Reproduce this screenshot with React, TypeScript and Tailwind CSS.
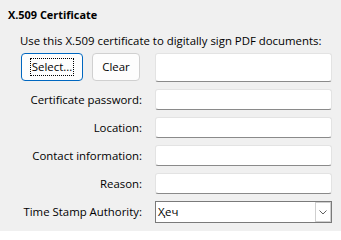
import React from 'react';

const labels = ['Certificate password:', 'Location:', 'Contact information:', 'Reason:'];

function Field({ tall }: { tall?: boolean }) {
  return (
    <div
      className={`bg-white border border-[#e3e3e3] border-b-[#8a8a8a] rounded-[3px] ${
        tall ? 'h-[29px]' : 'h-[21px]'
      }`}
    />
  );
}

export default function App() {
  return (
    <div
      className="w-[341px] h-[231px] bg-[#f0f0f0] text-black text-[11.4px] leading-[16px] overflow-hidden"
      style={{ fontFamily: '"Open Sans", "Noto Sans", sans-serif' }}
    >
      <div className="pl-2 pt-[7px] font-bold text-[10.9px]">X.509 Certificate</div>
      <div className="pl-5 mt-[10px]">Use this X.509 certificate to digitally sign PDF documents:</div>

      <div className="grid grid-cols-[155px_177px] gap-y-[7px] mt-[4px]">
        {/* buttons + certificate field */}
        <div className="flex gap-[9px] pl-[21px]">
          <button className="w-[62px] h-[28px] bg-[#fdfdfd] border border-[#0067c0] rounded-[4px] flex items-center justify-center">
            <span className="border border-dotted border-black px-[1px] leading-[16px]">Select...</span>
          </button>
          <button className="w-[48px] h-[28px] bg-[#fdfdfd] border border-[#d0d0d0] rounded-[4px] flex items-center justify-center">
            Clear
          </button>
        </div>
        <Field tall />

        {labels.map((l) => (
          <React.Fragment key={l}>
            <div className="text-right pr-[13px] flex items-center justify-end">{l}</div>
            <Field />
          </React.Fragment>
        ))}

        <div className="text-right pr-[13px] flex items-center justify-end">Time Stamp Authority:</div>
        <div className="h-[22px] bg-white border border-[#7a7a7a] flex items-center">
          <span className="flex-1 pl-[2px]">Ҳеч</span>
          <div className="w-[16px] h-[20px] border border-[#cfcfcf] bg-white flex items-center justify-center">
            <svg width="8" height="5" viewBox="0 0 8 5" fill="none">
              <path d="M0.5 0.5 L4 4 L7.5 0.5" stroke="#606060" strokeWidth="1" />
            </svg>
          </div>
        </div>
      </div>
    </div>
  );
}
